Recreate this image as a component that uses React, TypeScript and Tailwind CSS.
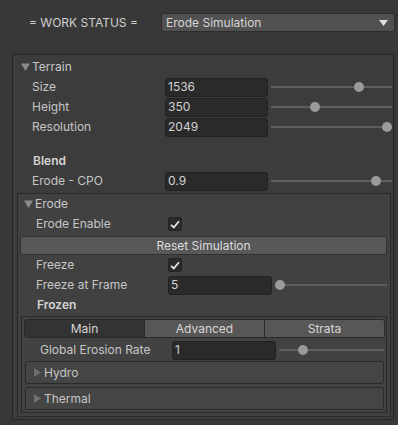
import React from "react";

const FONT = { fontFamily: "Inter, 'Noto Sans', sans-serif" };

function DownTri() {
    return (
        <svg width="9" height="8" viewBox="0 0 9 8" className="shrink-0">
            <path d="M0 0.5 L9 0.5 L4.5 8 Z" fill="#8a8a8a" />
        </svg>
    );
}

function RightTri() {
    return (
        <svg width="7" height="9" viewBox="0 0 7 9" className="shrink-0">
            <path d="M0 0 L7 4.5 L0 9 Z" fill="#6f6f6f" />
        </svg>
    );
}

function Slider({ value, className = "" }: { value: number; className?: string }) {
    return (
        <div className={`relative flex-1 h-full ${className}`}>
            <div className="absolute left-0 right-0 top-1/2 -translate-y-1/2 h-[2px] bg-[#5e5e5e]" />
            <div
                className="absolute top-1/2 -translate-y-1/2 w-[10px] h-[10px] rounded-full bg-[#9a9a9a]"
                style={{ left: `calc(${value} * (100% - 10px))` }}
            />
        </div>
    );
}

function Field({ value, w }: { value: string; w: string }) {
    return (
        <div className={`${w} h-[19px] shrink-0 rounded-[3px] bg-[#2a2a2a] border border-[#222] flex items-center pl-[2px] text-[#d2d2d2]`}>
            {value}
        </div>
    );
}

function Check() {
    return (
        <div className="w-[14px] h-[14px] rounded-[2px] bg-[#2b2b2b] border border-[#232323] flex items-center justify-center">
            <svg width="10" height="9" viewBox="0 0 10 9">
                <path d="M1 4.8 L3.8 7.4 L9 1.2" stroke="#e6e6e6" strokeWidth="1.7" fill="none" />
            </svg>
        </div>
    );
}

function Foldout({ label }: { label: string }) {
    return (
        <div className="h-[23px] ml-[3px] mr-[2px] rounded-[3px] border border-[#2a2a2a] bg-[#454545] flex items-center pl-[8px] gap-[3px]">
            <RightTri />
            <span>{label}</span>
        </div>
    );
}

export default function App() {
    return (
        <div className="w-[398px] h-[425px] overflow-hidden bg-[#383838] text-[12px] text-[#c6c6c6]" style={FONT}>
            {/* header */}
            <div className="flex items-center pt-[13px] pl-[29px]">
                <span className="w-[132px] text-[#cfcfcf]">= WORK STATUS =</span>
                <div className="w-[234px] h-[19px] rounded-[3px] bg-[#515151] border border-[#2d2d2d] flex items-center pl-[4px] pr-[6px] text-[#d6d6d6]">
                    <span className="flex-1">Erode Simulation</span>
                    <svg width="9" height="6" viewBox="0 0 9 6">
                        <path d="M0 0 L9 0 L4.5 6 Z" fill="#e0e0e0" />
                    </svg>
                </div>
            </div>

            {/* terrain panel */}
            <div className="mt-[22px] ml-[12px] w-[382px] border border-[#262626] bg-[#3c3c3c] pt-[2px] pb-[2px]">
                <div className="h-[20px] flex items-center pl-[8px] gap-[2px]">
                    <DownTri />
                    <span>Terrain</span>
                </div>
                {[
                    ["Size", "1536", 0.75],
                    ["Height", "350", 0.35],
                    ["Resolution", "2049", 1],
                ].map(([label, val, v]) => (
                    <div key={label as string} className="h-[20px] flex items-center pl-[19px] pr-[1px]">
                        <span className="w-[133px] shrink-0">{label}</span>
                        <Field value={val as string} w="w-[103px]" />
                        <Slider value={v as number} className="ml-[3px]" />
                    </div>
                ))}
                <div className="mt-[14px] h-[20px] flex items-center pl-[20px] font-semibold text-[#d4d4d4]">Blend</div>
                <div className="h-[20px] flex items-center pl-[19px] pr-[1px]">
                    <span className="w-[133px] shrink-0">Erode - CPO</span>
                    <Field value="0.9" w="w-[103px]" />
                    <Slider value={0.9} className="ml-[3px]" />
                </div>

                {/* erode box */}
                <div className="mt-[2px] ml-[4px] mr-[2px] border border-[#2a2a2a] bg-[#414141] pb-[3px]">
                    <div className="h-[20px] flex items-center pl-[6px] gap-[2px]">
                        <DownTri />
                        <span>Erode</span>
                    </div>
                    <div className="h-[20px] flex items-center pl-[18px]">
                        <span className="w-[132px] shrink-0">Erode Enable</span>
                        <Check />
                    </div>
                    <div className="mt-[2px] ml-[2px] mr-[3px] h-[19px] rounded-[3px] bg-[#585858] border border-[#303030] flex items-center justify-center text-[#dcdcdc]">
                        Reset Simulation
                    </div>
                    <div className="h-[20px] flex items-center pl-[18px]">
                        <span className="w-[132px] shrink-0">Freeze</span>
                        <Check />
                    </div>
                    <div className="h-[20px] flex items-center pl-[18px] pr-[3px]">
                        <span className="w-[132px] shrink-0">Freeze at Frame</span>
                        <Field value="5" w="w-[104px]" />
                        <Slider value={0} className="ml-[3px]" />
                    </div>
                    <div className="h-[20px] flex items-center pl-[19px] font-semibold text-[#d4d4d4]">Frozen</div>

                    {/* tab box */}
                    <div className="mt-[1px] ml-[3px] mr-[3px] border border-[#2a2a2a] bg-[#424242] pb-[2px]">
                        <div className="mt-[2px] ml-[2px] mr-[1px] h-[19px] flex rounded-[3px] border border-[#2a2a2a] overflow-hidden">
                            <div className="flex-1 bg-[#333333] flex items-center justify-center text-[#d6d6d6]">Main</div>
                            <div className="flex-1 bg-[#575757] border-l border-[#2a2a2a] flex items-center justify-center text-[#d6d6d6]">Advanced</div>
                            <div className="flex-1 bg-[#575757] border-l border-[#2a2a2a] flex items-center justify-center text-[#d6d6d6]">Strata</div>
                        </div>
                        <div className="mt-[2px] h-[20px] flex items-center pl-[18px] pr-[2px]">
                            <span className="w-[132px] shrink-0">Global Erosion Rate</span>
                            <Field value="1" w="w-[104px]" />
                            <Slider value={0.2} className="ml-[3px]" />
                        </div>
                        <div className="mt-[1px]">
                            <Foldout label="Hydro" />
                        </div>
                        <div className="mt-[3px]">
                            <Foldout label="Thermal" />
                        </div>
                    </div>
                </div>
            </div>
        </div>
    );
}
